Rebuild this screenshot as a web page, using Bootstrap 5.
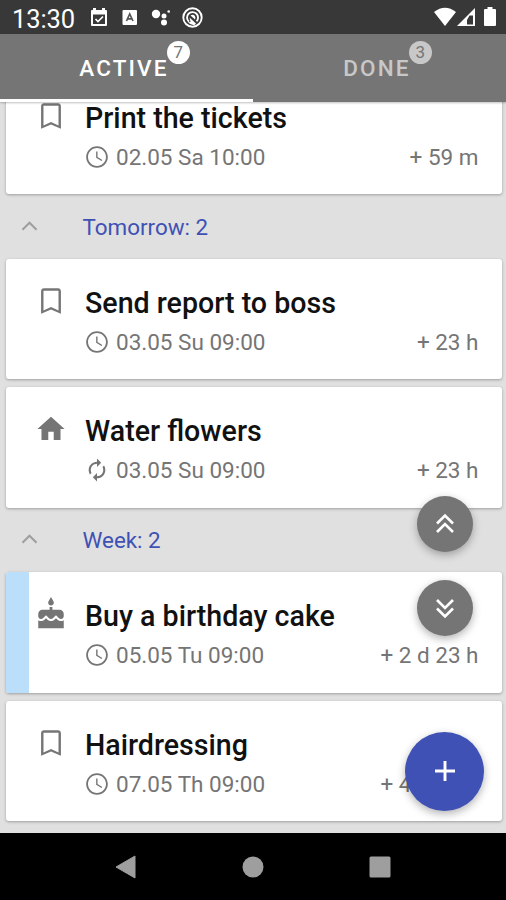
<!DOCTYPE html>
<html lang="en">
<head>
<meta charset="utf-8">
<meta name="viewport" content="width=device-width, initial-scale=1">
<title>Reminders</title>
<link rel="stylesheet" href="https://cdn.jsdelivr.net/npm/bootstrap@5.3.0/dist/css/bootstrap.min.css">
<style>
body{font-family:Roboto,"Liberation Sans",sans-serif;background:#e0e0e0;color:#757575}
svg{display:block;fill:currentColor;flex:none}
.screen{width:506px;height:900px}
.status-bar{height:34px;background:#383838;padding:3px 10px 0 12px}
.status-time{font-size:25.5px;line-height:34px;letter-spacing:-.1px;width:77px}
.status-icons{gap:13px;padding-bottom:3px}
.assist-icon{margin-left:-2px}
.tab-strip{height:68px;background:#757575;z-index:2;box-shadow:0 1px 2px rgba(0,0,0,.25)}
.tab-strip .nav-link{height:68px;border-radius:0;font-weight:500;font-size:22.5px;letter-spacing:2.15px;line-height:30px;color:#c8c8c8;padding:19px 0 0 0;border-bottom:3px solid transparent}
.tab-strip .nav-link.active{background:none;color:#fff;border-bottom-color:#fff;padding-right:5px}
.tab-strip .nav-item:last-child .nav-link{padding-right:5px}
.count{width:23px;height:23px;left:100%;top:-14px;margin-left:-2px;background:#c8c8c8;color:#757575;font-weight:400;font-size:17px;letter-spacing:0;line-height:23px}
.active .count{background:#fff}
.feed{padding:0 4.5px 0 6px}
.task{height:120.3px;border:0;border-radius:3px;margin-bottom:8.3px;box-shadow:0 1px 3px rgba(0,0,0,.3);overflow:hidden;color:#757575}
.task.first-task{margin-top:-28px}
.stripe{width:23px;background:#bbdefb;left:0}
.task-icon{width:79px;padding:25px 0 0 28px}
.task-body{padding:30px 23px 0 0}
.task-title{font-size:28.6px;font-weight:500;line-height:28px;color:#111;margin:0;white-space:nowrap}
.task-meta{font-size:22.5px;line-height:30px;margin-top:10px;font-weight:400}
.task-meta svg{margin-right:6px;margin-left:-1px}
.section-head{height:56.3px;color:#3f51b5;font-size:22.4px;padding:0 0 6px 8px}
.section-head svg{color:#9e9e9e;margin:-3px 37.5px 0 0}
.fab{right:33px;width:56px;height:56px;background:#757575;color:#fff;box-shadow:0 3px 8px rgba(0,0,0,.3);z-index:3}
.fab-top{top:495.5px}
.fab-bottom{top:580px}
.fab-add{right:22px;top:731.5px;width:79px;height:79px;background:#3f51b5}
.sys-nav{height:67px;background:#000;color:#9e9e9e;z-index:2;gap:104.5px;padding-right:2px}
</style>
</head>
<body>
<svg width="0" height="0" class="position-absolute">
<defs>
<symbol id="i-bookmark" viewBox="0 0 24 24"><path d="M17 3H7c-1.100 0-2 .9-2 2v16l7-3 7 3V5c0-1.100-.9-2-2-2zm.3 15.700L12 16.300 6.700 18.700V4.700h10.600z"/></symbol>
<symbol id="i-clock" viewBox="0 0 24 24"><path d="M12 2C6.500 2 2 6.500 2 12s4.500 10 10 10 10-4.500 10-10S17.500 2 12 2zm0 18.300c-4.600 0-8.300-3.700-8.300-8.300S7.400 3.700 12 3.700s8.300 3.700 8.300 8.300-3.700 8.300-8.300 8.300zM12.500 7H11.200v5.700l5 3.100.7-1.100-4.400-2.600z"/></symbol>
<symbol id="i-loop" viewBox="0 0 24 24"><path d="M12 6v3l4-4-4-4v3c-4.420 0-8 3.580-8 8 0 1.570.46 3.030 1.240 4.260L6.700 14.800A5.900 5.900 0 0 1 6 12c0-3.310 2.690-6 6-6zm6.760 1.740L17.300 9.200c.44.840.7 1.790.7 2.800 0 3.310-2.690 6-6 6v-3l-4 4 4 4v-3c4.420 0 8-3.580 8-8 0-1.570-.46-3.030-1.240-4.260z"/></symbol>
<symbol id="i-home" viewBox="-.5 -.5 25 25"><path d="M10 20v-6h4v6h5v-8h3L12 3 2 12h3v8z"/></symbol>
<symbol id="i-cake" viewBox="0 0 24 24"><path d="M12 6c1.110 0 2-.9 2-2 0-.38-.1-.73-.29-1.030L12 0l-1.710 2.970c-.19.3-.29.65-.29 1.030 0 1.100.9 2 2 2zm4.600 9.990-1.070-1.070-1.080 1.070c-1.300 1.300-3.580 1.310-4.890 0l-1.070-1.070-1.090 1.070C6.750 16.640 5.880 17 4.960 17c-.73 0-1.400-.23-1.960-.61V22h18v-5.610c-.56.38-1.230.61-1.960.61-.92 0-1.790-.36-2.440-1.010zM18 9h-5V7h-2v2H6c-1.660 0-3 1.340-3 3v1.540c0 1.080.88 1.960 1.960 1.960.52 0 1.020-.2 1.380-.57l2.140-2.130 2.130 2.130c.74.74 2.030.74 2.770 0l2.140-2.130 2.130 2.130c.37.37.86.57 1.380.57 1.080 0 1.960-.88 1.960-1.960V12C21 10.340 19.660 9 18 9z"/></symbol>
<symbol id="i-up" viewBox="0 0 24 24"><path d="m12 8-6 6 1.100 1.100 4.900-4.900 4.900 4.900L18 14z"/></symbol>
</defs>
</svg>
<div class="screen position-relative overflow-hidden d-flex flex-column mx-auto">
  <header class="status-bar d-flex align-items-center text-white flex-shrink-0">
    <div class="status-time">13:30</div>
    <div class="status-icons d-flex align-items-center">
      <svg width="20" height="20" viewBox="0 0 20 20"><path fill-rule="evenodd" d="M4 1h3v2h6V1h3v2h1q1 0 1 1v14q0 1-1 1H3q-1 0-1-1V4q0-1 1-1h1zM4 7.500v9.500h12V7.500z"/><path d="m6.500 12 2.500 2.500 5-5" fill="none" stroke="currentColor" stroke-width="1.700"/></svg>
      <svg width="16" height="17" viewBox="0 0 16 17" class="ms-n1"><rect x="0.500" y="1" width="14.500" height="15" rx="1"/><path d="M4.500 12 7.700 5 11 12M5.500 9.800h4.500" fill="none" stroke="#555" stroke-width="1.700"/></svg>
      <svg width="20" height="18" viewBox="0 0 20 18"><circle cx="5" cy="6" r="4.200"/><circle cx="13" cy="8" r="2.500"/><circle cx="17.700" cy="3.500" r="1.300"/><circle cx="13" cy="14.500" r="3"/></svg>
      <svg width="21" height="21" viewBox="0 0 21 21" class="assist-icon"><circle cx="10.500" cy="10.500" r="9.200" fill="none" stroke="currentColor" stroke-width="1.900"/><path d="M7 14.800a5.500 5.500 0 1 1 7.500-.4" fill="none" stroke="currentColor" stroke-width="1.900"/><path d="m7.500 10.500 6.500 6-1 1.300q-4 1-7-2.500l2.500-.3zM8.500 8.500c3-2 6 1 4.500 4z"/></svg>
    </div>
    <div class="d-flex align-items-center ms-auto pb-1">
      <svg width="22" height="20" viewBox="0 0 22 20"><path d="M0 5q11-8.500 22 0L11 19z"/></svg>
      <svg width="20" height="20" viewBox="0 0 20 20" class="me-2 ms-0"><path fill-rule="evenodd" d="M19 1v18H1zM17 8.500h-3.500L11 13v4.500h6z"/></svg>
      <svg width="12" height="20" viewBox="0 0 12 20"><path d="M3.500 0h5v2H11q1 0 1 1v15q0 1-1 1H1q-1 0-1-1V3q0-1 1-1h2.500z"/></svg>
    </div>
  </header>
  <ul class="tab-strip nav nav-justified flex-nowrap position-relative flex-shrink-0">
    <li class="nav-item w-50"><a class="nav-link active" href="#"><span class="position-relative">ACTIVE<span class="count position-absolute rounded-circle text-center">7</span></span></a></li>
    <li class="nav-item w-50"><a class="nav-link" href="#"><span class="position-relative">DONE<span class="count position-absolute rounded-circle text-center">3</span></span></a></li>
  </ul>
  <main class="feed flex-grow-1 overflow-hidden">
    <article class="task first-task card flex-row">
      <div class="task-icon"><svg width="34" height="34"><use href="#i-bookmark"/></svg></div>
      <div class="task-body flex-grow-1"><h2 class="task-title">Print the tickets</h2>
        <div class="task-meta d-flex align-items-center"><svg width="26" height="26"><use href="#i-clock"/></svg><span>02.05 Sa 10:00</span><span class="ms-auto">+ 59 m</span></div></div>
    </article>
    <div class="section-head d-flex align-items-center"><svg width="31" height="31"><use href="#i-up"/></svg>Tomorrow: 2</div>
    <article class="task card flex-row">
      <div class="task-icon"><svg width="34" height="34"><use href="#i-bookmark"/></svg></div>
      <div class="task-body flex-grow-1"><h2 class="task-title">Send report to boss</h2>
        <div class="task-meta d-flex align-items-center"><svg width="26" height="26"><use href="#i-clock"/></svg><span>03.05 Su 09:00</span><span class="ms-auto">+ 23 h</span></div></div>
    </article>
    <article class="task card flex-row">
      <div class="task-icon"><svg width="34" height="34"><use href="#i-home"/></svg></div>
      <div class="task-body flex-grow-1"><h2 class="task-title">Water flowers</h2>
        <div class="task-meta d-flex align-items-center"><svg width="26" height="26" viewBox="-.5 -.5 25 25"><use href="#i-loop" width="24" height="24"/></svg><span>03.05 Su 09:00</span><span class="ms-auto">+ 23 h</span></div></div>
    </article>
    <div class="section-head d-flex align-items-center"><svg width="31" height="31"><use href="#i-up"/></svg>Week: 2</div>
    <article class="task card flex-row">
      <div class="stripe position-absolute h-100"></div>
      <div class="task-icon"><svg width="34" height="34"><use href="#i-cake"/></svg></div>
      <div class="task-body flex-grow-1"><h2 class="task-title">Buy a birthday cake</h2>
        <div class="task-meta d-flex align-items-center"><svg width="26" height="26"><use href="#i-clock"/></svg><span>05.05 Tu 09:00</span><span class="ms-auto">+ 2 d 23 h</span></div></div>
    </article>
    <article class="task card flex-row">
      <div class="task-icon"><svg width="34" height="34"><use href="#i-bookmark"/></svg></div>
      <div class="task-body flex-grow-1"><h2 class="task-title">Hairdressing</h2>
        <div class="task-meta d-flex align-items-center"><svg width="26" height="26"><use href="#i-clock"/></svg><span>07.05 Th 09:00</span><span class="ms-auto">+ 4 d 23 h</span></div></div>
    </article>
  </main>
  <button class="fab fab-top btn p-0 border-0 rounded-circle position-absolute d-flex align-items-center justify-content-center" aria-label="Scroll up"><svg width="20" height="22" viewBox="0 0 20 22"><path d="m2 10.500 8-8 8 8M2 19l8-8 8 8" fill="none" stroke="currentColor" stroke-width="2.600"/></svg></button>
  <button class="fab fab-bottom btn p-0 border-0 rounded-circle position-absolute d-flex align-items-center justify-content-center" aria-label="Scroll down"><svg width="20" height="22" viewBox="0 0 20 22"><path d="m2 3 8 8 8-8M2 11.500l8 8 8-8" fill="none" stroke="currentColor" stroke-width="2.600"/></svg></button>
  <button class="fab fab-add btn p-0 border-0 rounded-circle position-absolute d-flex align-items-center justify-content-center" aria-label="Add"><svg width="22" height="22" viewBox="0 0 22 22"><path d="M11 1v20M1 11h20" stroke="currentColor" stroke-width="2.900"/></svg></button>
  <footer class="sys-nav d-flex align-items-center justify-content-center flex-shrink-0 position-relative">
    <svg width="24" height="26" viewBox="0 0 24 26"><path d="M2 13 21 2v22z" stroke="currentColor" stroke-linejoin="round"/></svg>
    <svg width="22" height="22" viewBox="0 0 22 22"><circle cx="11" cy="11" r="10.500"/></svg>
    <svg width="22" height="22" viewBox="0 0 22 22"><rect x=".5" y=".5" width="21" height="21" rx="1.500"/></svg>
  </footer>
</div>
<script src="https://cdn.jsdelivr.net/npm/bootstrap@5.3.0/dist/js/bootstrap.bundle.min.js"></script>
</body>
</html>
